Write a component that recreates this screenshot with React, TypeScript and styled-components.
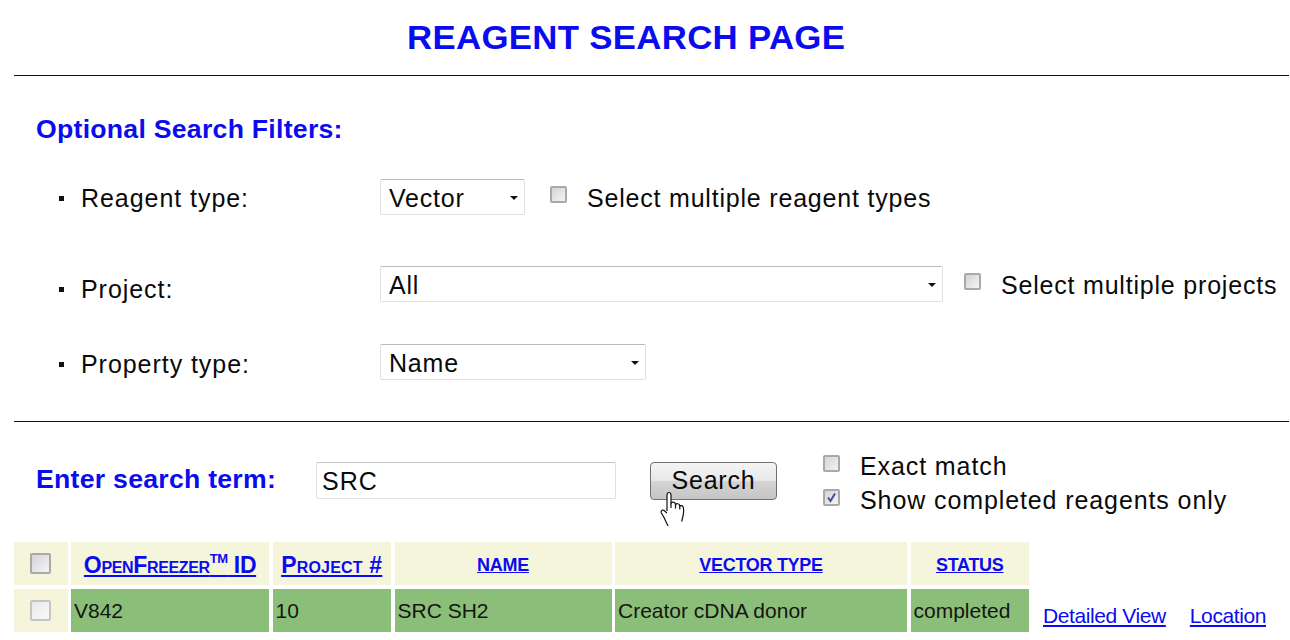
import React from "react";
import styled, { createGlobalStyle } from "styled-components";

const Global = createGlobalStyle`
  html, body { margin: 0; padding: 0; background: #fff; }
  body { font-family: "Liberation Sans", Arial, sans-serif; color: #0a0a0a; overflow: hidden; }
`;

const Page = styled.div`
  width: 1290px;
  height: 640px;
  overflow: hidden;
  display: flex;
  flex-direction: column;
  padding-left: 14px;
  box-sizing: border-box;
`;

const Title = styled.h1`
  margin: 0 0 0 393px;
  height: 75px;
  padding-top: 19px;
  box-sizing: border-box;
  font-size: 32.5px;
  line-height: 38px;
  font-weight: 700;
  color: #0b0bf0;
  letter-spacing: 0.3px;
  white-space: nowrap;
  transform: scaleX(1.07);
  transform-origin: left center;
`;

const Rule = styled.hr`
  margin: 0;
  border: 0;
  height: 1px;
  background: #111;
  width: 1275px;
`;

const Heading = styled.h2`
  margin: 0;
  font-size: 25px;
  line-height: 28px;
  font-weight: 700;
  color: #0b0bf0;
  letter-spacing: 0.25px;
  white-space: nowrap;
  transform: scaleX(1.065);
  transform-origin: left center;
`;

const FiltersHeading = styled(Heading)`
  margin: 39px 0 25px 22px;
`;

const FilterList = styled.div`
  display: flex;
  flex-direction: column;
  padding-left: 44px;
`;

const FilterRow = styled.div<{ $height: number; $labelTop: number; $controlTop: number }>`
  height: ${(p) => p.$height}px;
  display: grid;
  grid-template-columns: 322px 1fr;
  & > :first-child { padding-top: ${(p) => p.$labelTop}px; }
  & > :last-child { padding-top: ${(p) => p.$controlTop}px; }
`;

const Label = styled.div`
  display: flex;
  align-items: center;
  gap: 18px;
  height: 28px;
  box-sizing: content-box;
  font-size: 25px;
  line-height: 28px;
  letter-spacing: 0.95px;
  &::before {
    content: "";
    width: 5px;
    height: 5px;
    background: #111;
    flex: none;
    margin-left: 1px;
    margin-right: -1px;
  }
`;

const Controls = styled.div`
  display: flex;
  align-items: flex-start;
`;

const SelectBox = styled.div<{ $width: number }>`
  position: relative;
  width: ${(p) => p.$width}px;
  height: 36px;
  box-sizing: border-box;
  border: 1px solid #dfe1e6;
  border-top-color: #b9b9c0;
  border-radius: 2px;
  padding-left: 8px;
  font-size: 25px;
  line-height: 37px;
  letter-spacing: 0.8px;
  flex: none;
  &::after {
    content: "";
    position: absolute;
    right: 6px;
    top: 16px;
    border-left: 4px solid transparent;
    border-right: 4px solid transparent;
    border-top: 4px solid #111;
  }
`;

const Box = styled.span<{ $size?: number; $faint?: boolean }>`
  display: flex;
  align-items: center;
  justify-content: center;
  width: ${(p) => p.$size ?? 17}px;
  height: ${(p) => p.$size ?? 17}px;
  box-sizing: border-box;
  border: 2px solid ${(p) => (p.$faint ? "#c4c4c4" : "#a9a9a9")};
  border-radius: 2px;
  background: ${(p) =>
    p.$faint
      ? "linear-gradient(135deg, #e9e9ec, #fafafa)"
      : "linear-gradient(135deg, #d4d4d8, #f4f4f6)"};
  flex: none;
`;

const FilterBox = styled(Box)`
  margin-top: 7px;
`;

const OptionBox = styled(Box)`
  margin-top: -6px;
`;

const CheckOption = styled.div<{ $boxGap: number; $textTop: number }>`
  display: flex;
  align-items: flex-start;
  margin-left: ${(p) => p.$boxGap}px;
  gap: 20px;
  font-size: 25px;
  line-height: 28px;
  letter-spacing: 0.8px;
  white-space: nowrap;
  & > span:last-child { padding-top: ${(p) => p.$textTop}px; }
`;

const SearchBar = styled.div`
  display: flex;
  align-items: flex-start;
  height: 120px;
  padding-left: 22px;
`;

const SearchHeading = styled(Heading)`
  width: 280px;
  flex: none;
  margin-top: 43px;
`;

const SearchInput = styled.div`
  width: 300px;
  height: 37px;
  margin-top: 40px;
  box-sizing: border-box;
  border: 1px solid #dfe1e6;
  border-top-color: #c4c4ca;
  border-radius: 2px;
  padding-left: 5px;
  font-size: 25px;
  line-height: 36px;
  letter-spacing: 1px;
  flex: none;
`;

const ButtonWrap = styled.div`
  position: relative;
  margin: 40px 0 0 34px;
  flex: none;
`;

const SearchButton = styled.button`
  display: block;
  width: 127px;
  height: 38px;
  padding: 0 0 1px;
  border: 1px solid #707070;
  border-radius: 4px;
  background: linear-gradient(#f4f4f4 0%, #e8e8e8 48%, #d3d3d3 52%, #c6c6c6 100%);
  font-family: inherit;
  font-size: 25px;
  letter-spacing: 0.8px;
  color: #0a0a0a;
`;

const Hand = styled.svg`
  position: absolute;
  left: 10px;
  top: 28px;
`;

const Options = styled.div`
  display: flex;
  flex-direction: column;
  gap: 6px;
  margin: 30px 0 0 46px;
`;

const OptionLine = styled.div`
  display: flex;
  align-items: center;
  height: 28px;
  gap: 20px;
  font-size: 25px;
  letter-spacing: 0.9px;
  white-space: nowrap;
`;

const TableRow = styled.div`
  display: grid;
  grid-template-columns: 53.5px 198px 118.5px 217px 292px 118.5px;
  column-gap: 3.5px;
  height: 43px;
  margin-bottom: 4px;
  align-items: stretch;
  position: relative;
`;

const HeadCell = styled.div<{ $small?: boolean; $tracking: number }>`
  background: #f5f5dc;
  display: flex;
  align-items: center;
  justify-content: center;
  padding-top: 3px;
  box-sizing: border-box;
  font-weight: 700;
  white-space: nowrap;
  font-size: ${(p) => (p.$small ? 18 : 23)}px;
  letter-spacing: ${(p) => p.$tracking}px;
  font-variant: ${(p) => (p.$small ? "normal" : "small-caps")};
  text-transform: ${(p) => (p.$small ? "uppercase" : "none")};
  a { color: #0b0bf0; text-decoration: underline; }
  sup { font-size: 13px; line-height: 0; position: relative; top: -1px; vertical-align: super; }
`;

const BoxCell = styled.div`
  background: #f5f5dc;
  display: flex;
  align-items: center;
  justify-content: center;
`;

const DataCell = styled.div`
  background: #8bbf79;
  display: flex;
  align-items: center;
  padding-left: 3px;
  font-size: 21px;
  letter-spacing: 0;
  color: #151510;
  white-space: nowrap;
`;

const RowLinks = styled.div`
  position: absolute;
  left: 1029px;
  top: 13px;
  display: flex;
  gap: 24px;
  font-size: 21px;
  line-height: 28px;
  letter-spacing: -0.4px;
  white-space: nowrap;
  a { color: #0b0bf0; text-decoration: underline; }
`;

const handOutline =
  "M7 21V5.500C7 3.500 7.800 2.500 9 2.500s2 1 2 3V13c1-1.200 3.500-1.200 4.200.5l.3 1c1-1.200 3.300-1 4 .6l.3 1c1-1 3-.6 3.500 1.200.5 2.500.4 5.700-.3 8.700l-1.300 5.500M8 36l-4-8.500-2.600-4.500c-1-2 .8-3.600 2.600-2.500L7 23";

export default function App() {
  return (
    <Page>
      <Global />
      <Title>REAGENT SEARCH PAGE</Title>
      <Rule />
      <FiltersHeading>Optional Search Filters:</FiltersHeading>
      <FilterList>
        <FilterRow $height={90} $labelTop={16} $controlTop={11}>
          <Label>Reagent type:</Label>
          <Controls>
            <SelectBox $width={145}>Vector</SelectBox>
            <CheckOption $boxGap={25} $textTop={5}>
              <FilterBox />
              <span>Select multiple reagent types</span>
            </CheckOption>
          </Controls>
        </FilterRow>
        <FilterRow $height={78} $labelTop={17} $controlTop={8}>
          <Label>Project:</Label>
          <Controls>
            <SelectBox $width={563}>All</SelectBox>
            <CheckOption $boxGap={21} $textTop={5}>
              <FilterBox />
              <span>Select multiple projects</span>
            </CheckOption>
          </Controls>
        </FilterRow>
        <FilterRow $height={85} $labelTop={14} $controlTop={8}>
          <Label>Property type:</Label>
          <Controls>
            <SelectBox $width={266}>Name</SelectBox>
          </Controls>
        </FilterRow>
      </FilterList>
      <Rule />
      <SearchBar>
        <SearchHeading>Enter search term:</SearchHeading>
        <SearchInput>SRC</SearchInput>
        <ButtonWrap>
          <SearchButton>Search</SearchButton>
          <Hand width="28" height="36" viewBox="0 0 28 36" fill="#fff" stroke="#111" strokeWidth="1.200">
            <path d={handOutline} />
            <path d="M11 13v5M15.500 14.500v4M19.800 16v3.500" fill="none" />
          </Hand>
        </ButtonWrap>
        <Options>
          <OptionLine>
            <OptionBox />
            <span>Exact match</span>
          </OptionLine>
          <OptionLine>
            <OptionBox>
              <svg width="11" height="11" viewBox="0 0 11 11" fill="none" stroke="#3a4fa0" strokeWidth="2">
                <path d="M2 5.500l2.500 3.500L9 1.500" />
              </svg>
            </OptionBox>
            <span>Show completed reagents only</span>
          </OptionLine>
        </Options>
      </SearchBar>
      <TableRow>
        <BoxCell><Box $size={21} /></BoxCell>
        <HeadCell $tracking={-0.35}><a>OpenFreezer<sup>TM</sup> ID</a></HeadCell>
        <HeadCell $tracking={0.2}><a>Project #</a></HeadCell>
        <HeadCell $small $tracking={-0.3}><a>Name</a></HeadCell>
        <HeadCell $small $tracking={-0.3}><a>Vector Type</a></HeadCell>
        <HeadCell $small $tracking={-0.3}><a>Status</a></HeadCell>
      </TableRow>
      <TableRow>
        <BoxCell><Box $size={21} $faint /></BoxCell>
        <DataCell>V842</DataCell>
        <DataCell>10</DataCell>
        <DataCell>SRC SH2</DataCell>
        <DataCell>Creator cDNA donor</DataCell>
        <DataCell>completed</DataCell>
        <RowLinks>
          <a>Detailed View</a>
          <a>Location</a>
        </RowLinks>
      </TableRow>
    </Page>
  );
}
